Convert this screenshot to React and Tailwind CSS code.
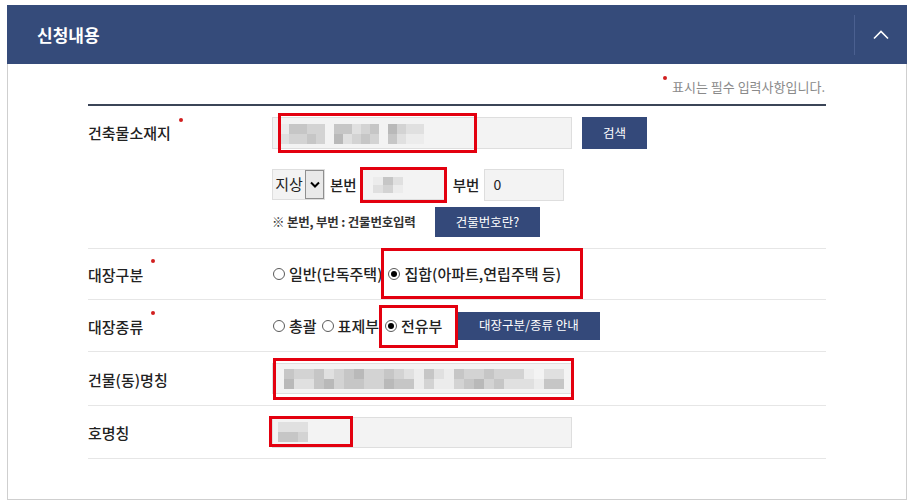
import React from "react";

const SHADE = [
  "bg-transparent",
  "bg-[#ececec]",
  "bg-[#e0e0e0]",
  "bg-[#d3d3d3]",
  "bg-[#c6c6c6]",
  "bg-[#b9b9b9]",
  "bg-[#adadad]",
];

function Blur({ rows, cell }) {
  return (
    <div className="flex flex-col">
      {rows.map((r, i) => (
        <div key={i} className="flex">
          {r.split("").map((c, j) => (
            <div key={j} className={`${cell} ${SHADE[Number(c)]}`} />
          ))}
        </div>
      ))}
    </div>
  );
}

function Dot({ className }) {
  return <span className={`absolute w-[4px] h-[4px] rounded-full bg-[#d11f1f] ${className}`} />;
}

function Label({ children, required }) {
  return (
    <span className="relative text-[15px] leading-[20px] font-medium text-[#222]">
      {children}
      {required && <Dot className="right-[-12px] top-[-5px]" />}
    </span>
  );
}

function Radio({ checked, label, className = "" }) {
  return (
    <span className={`flex items-center ${className}`}>
      <span className="w-[12px] h-[12px] rounded-full border border-[#5a5a5a] bg-white flex items-center justify-center">
        {checked && <span className="w-[6px] h-[6px] rounded-full bg-black" />}
      </span>
      <span className="ml-[4px] text-[15px] leading-[20px] font-medium text-[#222]">{label}</span>
    </span>
  );
}

function Btn({ children, className = "" }) {
  return (
    <div
      className={`bg-[#34497a] text-white text-[12.5px] flex items-center justify-center ${className}`}
    >
      {children}
    </div>
  );
}

function RedBox({ className }) {
  return <div className={`absolute border-[3px] border-[#e3000f] ${className}`} />;
}

export default function App() {
  return (
    <div className="relative w-[913px] h-[504px] bg-white overflow-hidden font-['Noto_Sans_CJK_KR','Noto_Sans',sans-serif]">
      <div className="ml-[7px] mt-[5px] w-[900px]">
        {/* Header */}
        <div className="h-[59px] bg-[#354b7a] flex items-center justify-between">
          <span className="pl-[30px] text-[17px] font-bold text-white leading-[20px]">신청내용</span>
          <div className="h-[40px] w-[53px] border-l border-[#4b6090] flex items-center justify-center">
            <svg width="16" height="10" viewBox="0 0 16 10">
              <polyline points="1,8.5 8,1.5 15,8.5" fill="none" stroke="#ffffff" strokeWidth="1.6" />
            </svg>
          </div>
        </div>

        {/* Body */}
        <div className="h-[436px] border border-t-0 border-[#cfcfcf]">
          <div className="ml-[80px] w-[738px]">
            {/* note */}
            <div className="h-[40px] pt-[13px] flex justify-end pr-[1px]">
              <span className="relative text-[13px] leading-[20px] text-[#8a8a8a]">
                <Dot className="left-[-9px] top-[-1px]" />
                표시는 필수 입력사항입니다.
              </span>
            </div>
            <div className="h-[2px] bg-[#3b4557]" />

            {/* Row 1 */}
            <div className="flex h-[143px] border-b border-[#e6e6e6]">
              <div className="w-[184px] pt-[11px]">
                <div className="h-[32px] flex items-center">
                  <Label required>건축물소재지</Label>
                </div>
              </div>
              <div className="flex flex-col pt-[11px]">
                <div className="flex items-center">
                  <div className="w-[300px] h-[32px] bg-[#f3f3f3] border border-[#dedede] flex items-center pl-[7px] pt-[2px]">
                    <Blur
                      cell="w-[9px] h-[10px]"
                      rows={["1443304423405322", "2334305234304211"]}
                    />
                  </div>
                  <Btn className="ml-[10px] w-[65px] h-[32px]">검색</Btn>
                </div>
                <div className="flex items-center mt-[20px] h-[31px]">
                  <div className="flex h-[31px] bg-[#f3f3f3] border border-[#dedede]">
                    <span className="w-[32px] flex items-center justify-center text-[15px] text-[#222]">지상</span>
                    <span className="w-[19px] h-full border border-[#8f8f8f] bg-[#e9e9e9] flex items-center justify-center">
                      <svg width="10" height="7" viewBox="0 0 10 7">
                        <polyline points="1,1.5 5,5.5 9,1.5" fill="none" stroke="#000" strokeWidth="2" />
                      </svg>
                    </span>
                  </div>
                  <span className="ml-[5px] text-[14.5px] font-medium text-[#222]">본번</span>
                  <div className="ml-[5px] w-[83px] h-[31px] bg-[#f3f3f3] border border-[#dedede] flex items-center pl-[10px]">
                    <Blur cell="w-[10px] h-[8px]" rows={["142", "231"]} />
                  </div>
                  <span className="ml-[8px] text-[14.5px] font-medium text-[#222]">부번</span>
                  <div className="ml-[5px] w-[80px] h-[32px] bg-[#f3f3f3] border border-[#dedede] flex items-center pl-[8px] text-[14px] text-[#222]">
                    0
                  </div>
                </div>
                <div className="flex items-center mt-[7px]">
                  <span className="w-[163px] text-[12.5px] font-semibold text-[#333] tracking-[-0.2px]">※ 본번, 부번 : 건물번호입력</span>
                  <Btn className="w-[105px] h-[30px]">건물번호란?</Btn>
                </div>
              </div>
            </div>

            {/* Row 2 */}
            <div className="flex items-center h-[51px] border-b border-[#e6e6e6]">
              <div className="w-[184px]">
                <Label required>대장구분</Label>
              </div>
              <div className="flex items-center pl-[1px]">
                <Radio label="일반(단독주택)" />
                <Radio checked label="집합(아파트,연립주택 등)" className="ml-[6px]" />
              </div>
            </div>

            {/* Row 3 */}
            <div className="flex items-center h-[52px] border-b border-[#e6e6e6]">
              <div className="w-[184px]">
                <Label required>대장종류</Label>
              </div>
              <div className="flex items-center pl-[1px]">
                <Radio label="총괄" />
                <Radio label="표제부" className="ml-[5px]" />
                <Radio checked label="전유부" className="ml-[6px]" />
                <Btn className="ml-[15px] w-[143px] h-[28px]">대장구분/종류 안내</Btn>
              </div>
            </div>

            {/* Row 4 */}
            <div className="flex items-center h-[54px] border-b border-[#e6e6e6]">
              <div className="w-[184px]">
                <Label>건물(동)명칭</Label>
              </div>
              <div className="w-[300px] h-[31px] bg-[#f3f3f3] border border-[#dedede] flex items-center pl-[11px]">
                <Blur
                  cell="w-[10px] h-[10px]"
                  rows={["4334234533432142143343331022", "5224534433544131134534222144"]}
                />
              </div>
            </div>

            {/* Row 5 */}
            <div className="flex items-center h-[53px] border-b border-[#e6e6e6]">
              <div className="w-[184px]">
                <Label>호명칭</Label>
              </div>
              <div className="w-[300px] h-[31px] bg-[#f3f3f3] border border-[#dedede] flex items-center pl-[5px]">
                <Blur cell="w-[10px] h-[10px]" rows={["222", "443"]} />
              </div>
            </div>
          </div>
        </div>
      </div>

      {/* Annotation boxes */}
      <RedBox className="left-[278px] top-[113px] w-[199px] h-[40px]" />
      <RedBox className="left-[360px] top-[167px] w-[87px] h-[36px]" />
      <RedBox className="left-[381px] top-[248px] w-[202px] h-[51px]" />
      <RedBox className="left-[379px] top-[305px] w-[79px] h-[43px]" />
      <RedBox className="left-[273px] top-[358px] w-[301px] h-[42px]" />
      <RedBox className="left-[269px] top-[416px] w-[84px] h-[31px]" />
    </div>
  );
}
